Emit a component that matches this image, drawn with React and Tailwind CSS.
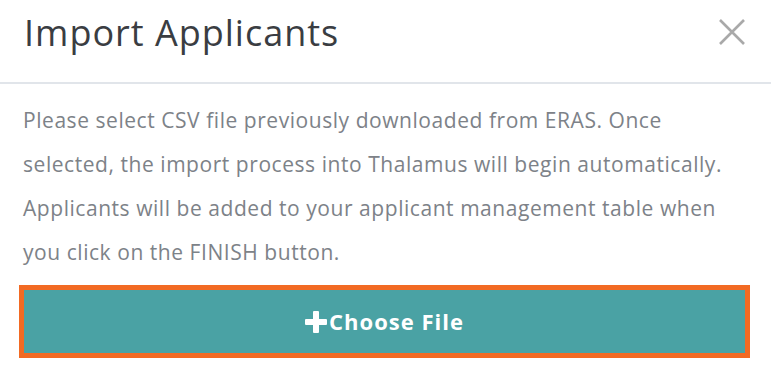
import React from 'react';

const ImportApplicants = () => {
  return (
    <div className="w-[771px] h-[382px] bg-white overflow-hidden" style={{ fontFamily: '"Open Sans", Lato, sans-serif' }}>
      {/* Header */}
      <div className="flex items-start justify-between h-[84px] border-b-2 border-[#e1e5ea] pl-[24px] pr-[26px]">
        <h1 className="mt-[10px] text-[36px] leading-[46px] tracking-[1px] text-[#3a3d42] font-normal">Import Applicants</h1>
        <button className="mt-[19px] w-[26px] h-[26px] text-[#a9a9a9]" title="Close">
          <svg viewBox="0 0 26 26" className="w-[26px] h-[26px]" fill="none" stroke="currentColor" strokeWidth={2.6}>
            <path d="M1 1L25 25M25 1L1 25" />
          </svg>
        </button>
      </div>

      {/* Body */}
      <div className="px-[23px] pt-[14px]">
        <p className="text-[21px] leading-[44px] tracking-[0.55px] text-[#7d8288] whitespace-nowrap">
          Please select CSV file previously downloaded from ERAS. Once
          <br />
          selected, the import process into Thalamus will begin automatically.
          <br />
          Applicants will be added to your applicant management table when
          <br />
          you click on the FINISH button.
        </p>
        <button className="mt-[11px] ml-[-4px] w-[731px] h-[73px] flex items-center justify-center border-[5px] border-[#f26a23] bg-[#4aa2a4] text-white text-[22px] tracking-[1px] font-bold">
          <svg viewBox="0 0 22 22" className="w-[22px] h-[22px] mr-[2px]" fill="currentColor">
            <rect x="8" y="0" width="6" height="22" rx="1" />
            <rect x="0" y="8" width="22" height="6" rx="1" />
          </svg>
          Choose File
        </button>
      </div>
    </div>
  );
};

export default function App() {
  return <ImportApplicants />;
}
